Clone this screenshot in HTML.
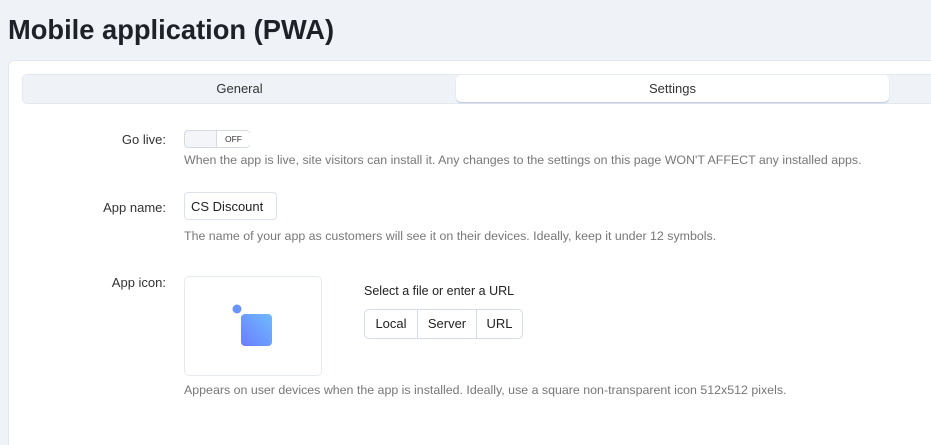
<!DOCTYPE html>
<html style="overflow:hidden;height:445px"><head><style>
body{margin:0;width:931px;height:445px;overflow:hidden;background:#eff2f7;font-family:"Liberation Sans",sans-serif;color:#222;position:relative}
h1{position:absolute;left:8px;top:14px;margin:0;font-size:27.3px;font-weight:bold;color:#1e2128}
.card{position:absolute;left:8px;top:60px;width:922px;height:384px;background:#fff;border:1px solid #e2e6ee;border-right:none;border-bottom:none;border-radius:6px 0 0 0}
.tabs{position:absolute;left:22px;top:74px;width:908px;height:28px;background:#eff2f7;border:1px solid #e4e8ef;border-right:none;border-radius:5px 0 0 5px}
.tab{position:absolute;top:0;height:28px;line-height:28px;text-align:center;font-size:13px;color:#333}
.tab.act{background:#fff;border-radius:5px;box-shadow:0 1px 1px #b9c6dc;top:0;height:27px;line-height:27px}
.lbl{position:absolute;width:166px;text-align:right;left:0;font-size:13px;color:#333}
.help{position:absolute;left:184px;font-size:12.4px;color:#777}
.sw{position:absolute;left:184px;top:130px;width:64px;height:16px;border:1px solid #d5dae3;border-radius:4px;background:#f3f5f8}
.sw span{position:absolute;left:31px;top:0;width:33px;height:16px;border-left:1px solid #d5dae3;background:#fff;border-radius:0 4px 4px 0;font-size:8.5px;line-height:16px;text-align:center;color:#333}
.inp{position:absolute;left:184px;top:192px;height:28px;border:1px solid #dde2ea;border-radius:4px;font-size:13px;line-height:28px;padding-left:6px;box-sizing:border-box;width:93px}
.icon{position:absolute;left:184px;top:276px;width:136px;height:98px;border:1px solid #e6e9ef;border-radius:5px}
.btns{position:absolute;left:364px;top:309px;height:28px;border:1px solid #d6dce6;border-radius:5px;display:flex;font-size:13px}
.btns div{line-height:28px;text-align:center;border-right:1px solid #d6dce6}
</style></head><body>
<h1>Mobile application (PWA)</h1>
<div class="card"></div>
<div class="tabs">
<div class="tab" style="left:0;width:433px">General</div>
<div class="tab act" style="left:433px;width:433px">Settings</div>
</div>
<div class="lbl" style="top:132px">Go live:</div>
<div class="sw"><span>OFF</span></div>
<div class="help" style="top:153px">When the app is live, site visitors can install it. Any changes to the settings on this page WON'T AFFECT any installed apps.</div>
<div class="lbl" style="top:200px">App name:</div>
<div class="inp">CS Discount</div>
<div class="help" style="top:229px">The name of your app as customers will see it on their devices. Ideally, keep it under 12 symbols.</div>
<div class="lbl" style="top:275px">App icon:</div>
<div class="icon">
<svg width="136" height="98" style="position:absolute;left:0;top:0"><defs><linearGradient id="g" x1="1" y1="0" x2="0" y2="1"><stop offset="0" stop-color="#6fbbff"/><stop offset="1" stop-color="#6a7dff"/></linearGradient></defs>
<circle cx="52" cy="32" r="4.5" fill="#6a95ff"/><rect x="56" y="37" width="31" height="32" rx="4" fill="url(#g)"/></svg>
</div>
<div style="position:absolute;left:364px;top:284px;font-size:12.5px;color:#222">Select a file or enter a URL</div>
<div class="btns"><div style="width:52px">Local</div><div style="width:58px">Server</div><div style="width:45px;border:none">URL</div></div>
<div class="help" style="top:383px">Appears on user devices when the app is installed. Ideally, use a square non-transparent icon 512x512 pixels.</div>
</body></html>
